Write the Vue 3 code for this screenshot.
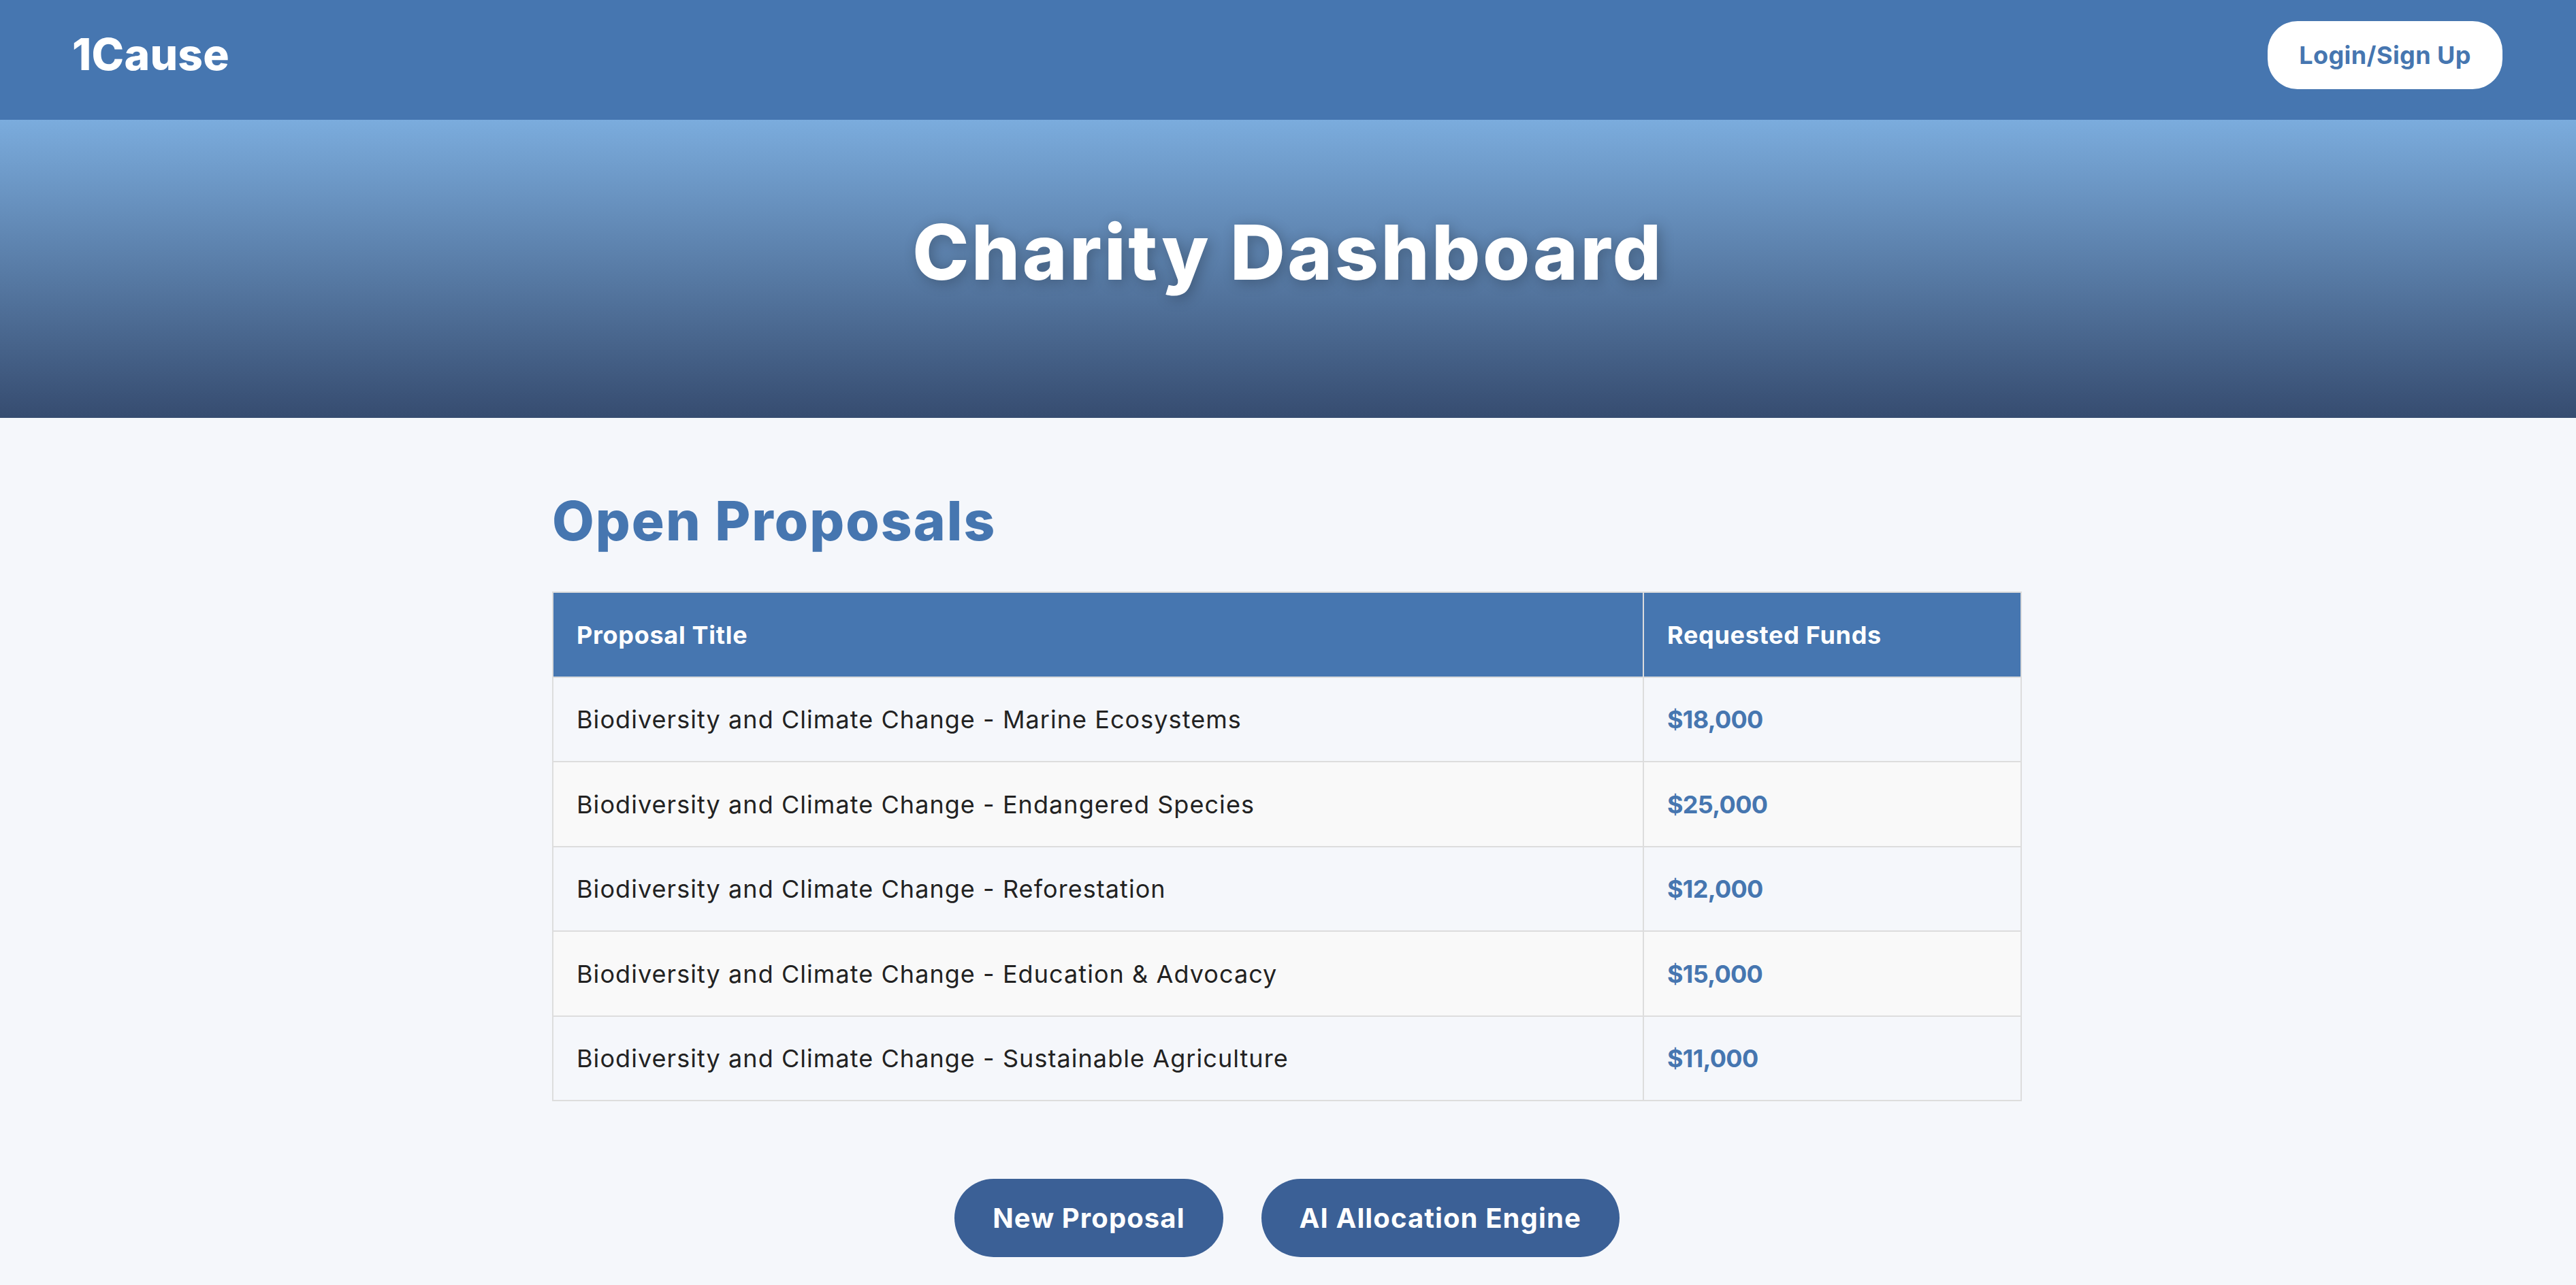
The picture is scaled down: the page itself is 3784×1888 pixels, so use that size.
<template>
  <div class="page">
    <header class="navbar">
      <div class="logo">1Cause</div>
      <button class="login-btn">Login/Sign Up</button>
    </header>

    <section class="hero">
      <h1 class="hero-title">Charity Dashboard</h1>
    </section>

    <main class="content">
      <h2 class="section-title">Open Proposals</h2>

      <table class="proposals">
        <thead>
          <tr>
            <th class="col-title">Proposal Title</th>
            <th>Requested Funds</th>
          </tr>
        </thead>
        <tbody>
          <tr v-for="p in proposals" :key="p.title">
            <td>{{ p.title }}</td>
            <td class="funds">{{ p.funds }}</td>
          </tr>
        </tbody>
      </table>

      <div class="actions">
        <button class="action-btn">New Proposal</button>
        <button class="action-btn">AI Allocation Engine</button>
      </div>
    </main>
  </div>
</template>

<script setup>
const proposals = [
  { title: "Biodiversity and Climate Change - Marine Ecosystems", funds: "$18,000" },
  { title: "Biodiversity and Climate Change - Endangered Species", funds: "$25,000" },
  { title: "Biodiversity and Climate Change - Reforestation", funds: "$12,000" },
  { title: "Biodiversity and Climate Change - Education & Advocacy", funds: "$15,000" },
  { title: "Biodiversity and Climate Change - Sustainable Agriculture", funds: "$11,000" }
];
</script>

<style>
html,
body {
  margin: 0;
  background: #f5f7fb;
}
</style>

<style scoped>
.page {
  font-family: Inter, "Open Sans", sans-serif;
  background: #f5f7fb;
  color: #222;
  height: 1888px;
  overflow: hidden;
}

.navbar {
  height: 176px;
  box-sizing: border-box;
  padding: 0 108px 14px 106px;
  background: #4676b0;
  display: flex;
  align-items: center;
  justify-content: space-between;
}

.logo {
  margin-bottom: 3px;
  font-size: 64px;
  font-weight: 800;
  color: #fff;
  letter-spacing: 0.3px;
}

.login-btn {
  width: 345px;
  height: 100px;
  border: none;
  border-radius: 44px;
  background: #fff;
  color: #4676b0;
  font-family: inherit;
  font-size: 36px;
  font-weight: 700;
  letter-spacing: 0.4px;
  padding: 0;
}

.hero {
  height: 438px;
  box-sizing: border-box;
  padding-top: 110px;
  background: linear-gradient(to bottom, #7bacdd, #364c70);
  text-align: center;
}

.hero-title {
  margin: 0;
  font-size: 112px;
  line-height: 168px;
  font-weight: 800;
  letter-spacing: 3.5px;
  color: #fff;
  text-shadow: 4px 4px 20px rgba(0, 0, 0, 0.25);
}

.content {
  width: 2159px;
  margin-left: 811px;
  padding-top: 91px;
}

.section-title {
  margin: 0 0 44px;
  font-size: 80px;
  line-height: 120px;
  font-weight: 800;
  letter-spacing: 2px;
  color: #4676b0;
}

.proposals {
  width: 100%;
  border-collapse: collapse;
  table-layout: fixed;
  font-size: 36px;
  letter-spacing: 1.06px;
}

.proposals th,
.proposals td {
  box-sizing: border-box;
  padding: 0 34px;
  border: 2px solid #ddd;
  text-align: left;
}

.proposals td {
  height: 124px;
}

.col-title {
  width: 1602px;
}

.proposals th {
  height: 125px;
  background: #4676b0;
  color: #fff;
  font-weight: 700;
  letter-spacing: 0.7px;
}

.proposals tbody tr:nth-child(even) td {
  height: 125px;
  background: #f9f9f9;
}

.proposals .funds {
  color: #4676b0;
  font-weight: 700;
  letter-spacing: -0.7px;
}

.actions {
  margin-top: 114px;
  display: flex;
  justify-content: center;
  gap: 56px;
}

.action-btn {
  height: 115px;
  padding: 0 56px;
  border: none;
  border-radius: 58px;
  background: #3b6096;
  color: #fff;
  font-family: inherit;
  font-size: 40px;
  font-weight: 700;
  letter-spacing: 1.1px;
}
</style>
